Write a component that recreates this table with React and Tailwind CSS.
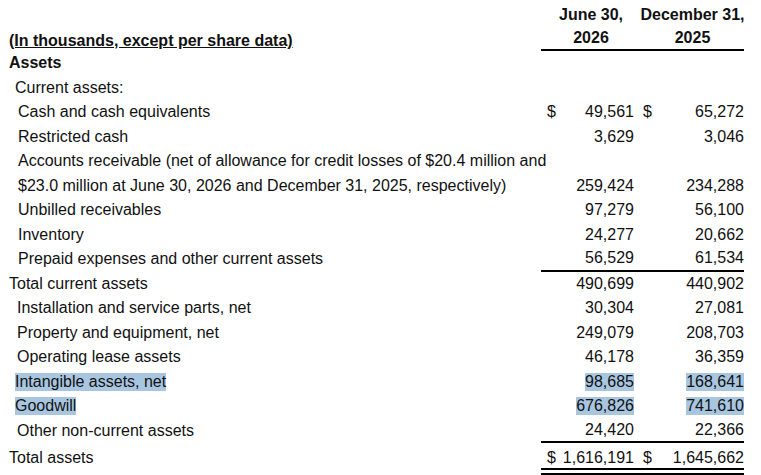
import React from "react";

const font = { fontFamily: '"Liberation Sans", Arial, sans-serif' };

function Num({ children, hl }) {
  if (hl) {
    return <span className="inline-block bg-[#a9c6e1] leading-[18px]">{children}</span>;
  }
  return <span>{children}</span>;
}

function Row({ label, indent = "pl-[18px]", v1, v2, dollar, hl, border, labelHl }) {
  return (
    <div className="flex h-[24.5px] items-stretch whitespace-nowrap">
      <div className={`flex w-[541px] shrink-0 items-center ${indent}`}>
        {labelHl ? (
          <span className="inline-block bg-[#a9c6e1] leading-[18px]">{label}</span>
        ) : (
          <span>{label}</span>
        )}
      </div>
      <div className={`flex w-[203px] shrink-0 items-center ${border ? "border-b-2 border-black" : ""}`}>
        {v1 !== undefined && (
          <>
            <div className="flex w-[100px] items-center justify-between pl-[6px] pr-[7px]">
              <span>{dollar ? "$" : ""}</span>
              <Num hl={hl}>{v1}</Num>
            </div>
            <div className="flex w-[103px] items-center justify-between pl-[2px]">
              <span>{dollar ? "$" : ""}</span>
              <Num hl={hl}>{v2}</Num>
            </div>
          </>
        )}
      </div>
    </div>
  );
}

export default function App() {
  return (
    <div className="w-[761px] h-[475px] overflow-hidden bg-white text-[16px] text-[#111] leading-[24.5px] whitespace-nowrap" style={font}>
      {/* header */}
      <div className="flex h-[51px]">
        <div className="flex w-[541px] shrink-0 items-end pl-[9px]">
          <span className="font-bold underline leading-[20px]">(In thousands, except per share data)</span>
        </div>
        <div className="flex w-[203px] shrink-0 border-b-2 border-black pt-[3px] font-bold leading-[23px]">
          <div className="flex w-[100px] flex-col items-center">
            <span>June 30,</span>
            <span>2026</span>
          </div>
          <div className="flex w-[103px] flex-col items-center">
            <span>December 31,</span>
            <span>2025</span>
          </div>
        </div>
      </div>

      <Row label={<span className="font-bold">Assets</span>} indent="pl-[9px]" />
      <Row label="Current assets:" indent="pl-[15px]" />
      <Row label="Cash and cash equivalents" v1="49,561" v2="65,272" dollar />
      <Row label="Restricted cash" v1="3,629" v2="3,046" />
      <Row label="Accounts receivable (net of allowance for credit losses of $20.4 million and" />
      <Row label="$23.0 million at June 30, 2026 and December 31, 2025, respectively)" v1="259,424" v2="234,288" />
      <Row label="Unbilled receivables" v1="97,279" v2="56,100" />
      <Row label="Inventory" v1="24,277" v2="20,662" />
      <Row label="Prepaid expenses and other current assets" v1="56,529" v2="61,534" border />
      <Row label="Total current assets" indent="pl-[9px]" v1="490,699" v2="440,902" />
      <Row label="Installation and service parts, net" indent="pl-[17px]" v1="30,304" v2="27,081" />
      <Row label="Property and equipment, net" indent="pl-[17px]" v1="249,079" v2="208,703" />
      <Row label="Operating lease assets" indent="pl-[17px]" v1="46,178" v2="36,359" />
      <Row label="Intangible assets, net" indent="pl-[15px]" v1="98,685" v2="168,641" hl labelHl />
      <Row label="Goodwill" indent="pl-[15px]" v1="676,826" v2="741,610" hl labelHl />
      <Row label="Other non-current assets" indent="pl-[17px]" v1="24,420" v2="22,366" border />

      {/* total */}
      <div className="flex pt-[5px] leading-[20px]">
        <div className="w-[541px] shrink-0 pl-[9px]">Total assets</div>
        <div className="flex w-[203px] shrink-0 border-b-[7px] border-double border-black">
          <div className="flex w-[100px] justify-between pl-[6px] pr-[7px]">
            <span>$</span>
            <span>1,616,191</span>
          </div>
          <div className="flex w-[103px] justify-between pl-[2px]">
            <span>$</span>
            <span>1,645,662</span>
          </div>
        </div>
      </div>
    </div>
  );
}
